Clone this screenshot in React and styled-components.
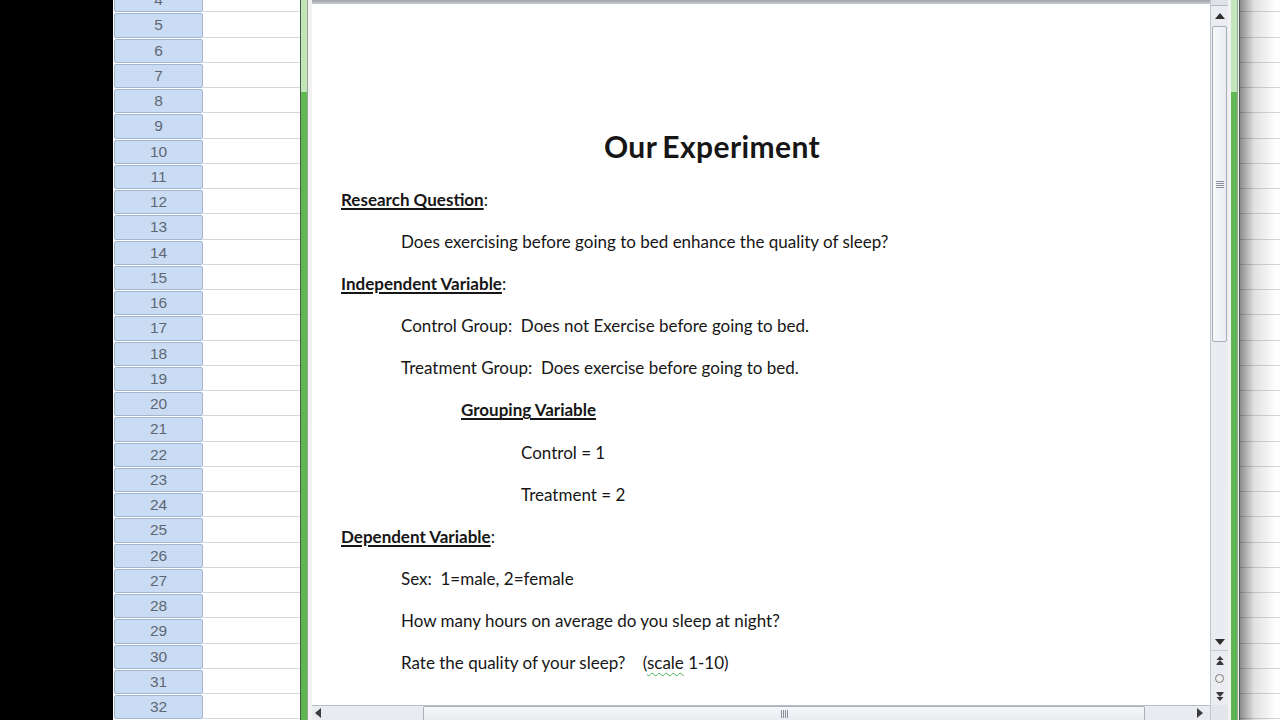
import React from 'react';
import styled, { createGlobalStyle } from 'styled-components';

const GlobalStyle = createGlobalStyle`
  html, body {
    margin: 0;
    padding: 0;
    background: #000;
  }
`

const ROW_H = 25.25;
const rows = Array.from({ length: 29 }, (_, i) => i + 4);

const Screen = styled.div`
  width: 1280px;
  height: 720px;
  display: flex;
  overflow: hidden;
  background: #000;
`

const BlackStrip = styled.div`
  width: 113px;
  flex-shrink: 0;
  background: #000;
`

const Sheet = styled.div`
  display: flex;
  flex-direction: column;
  margin-top: -13px;
  width: ${p => p.width}px;
  flex-shrink: 0;
  background: #fff;
  position: relative;
`

const HeaderCell = styled.div`
  height: ${ROW_H}px;
  box-sizing: border-box;
  flex-shrink: 0;
  padding: 1px 0 0 1px;
  background: #fff;
  div {
    height: 100%;
    box-sizing: border-box;
    border: 1px solid #a3b6cd;
    border-radius: 2px;
    background: #cadcf3;
    color: #5f6774;
    font-family: "Liberation Sans", Arial, sans-serif;
    font-size: 15.5px;
    display: flex;
    align-items: center;
    justify-content: center;
  }
`

const Cell = styled.div`
  height: ${ROW_H}px;
  flex-shrink: 0;
  box-sizing: border-box;
  border-bottom: 1px solid #d3d8e0;
`

const Shadow = styled.div`
  position: absolute;
  inset: 0;
  background: linear-gradient(to right, rgba(0,0,0,0.45), rgba(0,0,0,0.12) 14px, rgba(0,0,0,0) 36px);
  pointer-events: none;
`

const Frame = styled.div`
  width: 12px;
  flex-shrink: 0;
  display: flex;
  background: #f2f2f2;
  flex-direction: ${p => (p.right ? 'row-reverse' : 'row')};
  &::before {
    content: '';
    width: 1px;
    background: #4a5a4a;
  }
  &::after {
    content: '';
    width: 6px;
    margin: 0 ${p => (p.right ? '1px' : '0')} 0 0;
    background: linear-gradient(to bottom, #c3e5ba 0, #c3e5ba 92px, #62b954 92px, #5cb650 100%);
    border-right: 1px solid #98a298;
  }
`

const DocArea = styled.div`
  width: 898px;
  flex-shrink: 0;
  display: flex;
  flex-direction: column;
  background: #fff;
`

const TopBand = styled.div`
  height: 4px;
  background: linear-gradient(#9fa3a8, #c9ccd0);
  flex-shrink: 0;
`

const Page = styled.div`
  flex: 1;
  padding: 125px 0 0 29px;
  color: #161616;
  font-family: Lato, "Open Sans", sans-serif;
  font-size: 17px;
  overflow: hidden;
`

const Title = styled.h1`
  margin: 0 0 16px;
  width: 742px;
  text-align: center;
  font-size: 30px;
  line-height: 34px;
  font-weight: 700;
  letter-spacing: 0.4px;
  word-spacing: -2px;
`

const Line = styled.div`
  height: 42.1px;
  line-height: 42px;
  padding-left: ${p => (p.indent || 0) * 60}px;
  white-space: pre;
`

const Heading = styled.span`
  font-weight: 700;
  text-decoration: underline;
  text-decoration-thickness: 1.5px;
  text-underline-offset: 2px;
`

const Squiggle = styled.span`
  text-decoration: underline wavy #4caf50;
  text-decoration-thickness: 1px;
  text-underline-offset: 3px;
`

const HScroll = styled.div`
  height: 14px;
  flex-shrink: 0;
  display: flex;
  align-items: stretch;
  background: #e9ebf0;
  border-top: 1px solid #b9bec6;
`

const HThumb = styled.div`
  margin-left: 102px;
  width: 722px;
  box-sizing: border-box;
  border: 1px solid #a9b0bb;
  border-bottom: none;
  border-radius: 2px 2px 0 0;
  background: linear-gradient(#f6f7f9, #e8ebf0);
  display: flex;
  align-items: center;
  justify-content: center;
`

const Arrow = styled.div`
  width: 0;
  height: 0;
  align-self: center;
  border: 5px solid transparent;
  ${p => p.dir === 'left' && `border-right: 6px solid #3c3c3c; border-left: none; margin-left: 3px;`}
  ${p => p.dir === 'right' && `border-left: 6px solid #3c3c3c; border-right: none; margin-left: auto; margin-right: 7px;`}
  ${p => p.dir === 'up' && `border-bottom: 6px solid #2e2e2e; border-top: none; align-self: center;`}
  ${p => p.dir === 'down' && `border-top: 6px solid #2e2e2e; border-bottom: none; align-self: center;`}
`

const Grip = styled.div`
  display: flex;
  flex-direction: ${p => (p.vertical ? 'column' : 'row')};
  gap: 1px;
  span {
    background: #8a909a;
    ${p => (p.vertical ? 'width: 8px; height: 1px;' : 'width: 1px; height: 8px;')}
  }
`

const VScroll = styled.div`
  width: 18px;
  flex-shrink: 0;
  box-sizing: border-box;
  display: flex;
  flex-direction: column;
  background: #eaecf1;
  border-left: 1px solid #c3c7ce;
`

const SplitBox = styled.div`
  height: 5px;
  border-bottom: 1px solid #b5bac2;
  background: #dfe2e8;
`

const ArrowButton = styled.div`
  height: ${p => p.h || 18}px;
  display: flex;
  justify-content: center;
  align-items: center;
  border-bottom: ${p => (p.divider ? '1px solid #c6cad1' : 'none')};
`

const VThumb = styled.div`
  margin: 1px 1px 0 1px;
  height: 316px;
  box-sizing: border-box;
  border: 1px solid #a7aeb9;
  border-radius: 2px;
  background: linear-gradient(to right, #f7f8fa, #e9ecf1);
  display: flex;
  align-items: center;
  justify-content: center;
`

const Track = styled.div`
  flex: 1;
`

const NavIcon = styled.div`
  height: 18px;
  display: flex;
  align-items: center;
  justify-content: center;
`

const Corner = styled.div`
  height: 15px;
  background: #e3e5ea;
`

const Circle = styled.div`
  width: 7px;
  height: 7px;
  border-radius: 50%;
  border: 1px solid #7a7a7a;
  background: #f0f0f0;
`

const DoubleArrow = ({ down }) => (
  <svg width="8" height="9" viewBox="0 0 8 9" style={down ? { transform: 'scaleY(-1)' } : undefined}>
    <path d="M4 0 L7.5 4 H0.5 Z" fill="#3a3a3a" />
    <path d="M4 4 L7.5 8 H0.5 Z" fill="#3a3a3a" />
    <rect x="0.5" y="8" width="7" height="1" fill="#3a3a3a" />
  </svg>
)

const App = () => {
  return (
    <Screen>
      <GlobalStyle />
      <BlackStrip />
      <Sheet width={90}>
        {rows.map(n => (
          <HeaderCell key={n}><div>{n}</div></HeaderCell>
        ))}
      </Sheet>
      <Sheet width={97}>
        {rows.map(n => <Cell key={n} />)}
      </Sheet>

      <Frame />
      <DocArea>
        <TopBand />
        <Page>
          <Title>Our Experiment</Title>
          <Line><Heading>Research Question</Heading>:</Line>
          <Line indent={1}>Does exercising before going to bed enhance the quality of sleep?</Line>
          <Line><Heading>Independent Variable</Heading>:</Line>
          <Line indent={1}>Control Group:  Does not Exercise before going to bed.</Line>
          <Line indent={1}>Treatment Group:  Does exercise before going to bed.</Line>
          <Line indent={2}><Heading>Grouping Variable</Heading></Line>
          <Line indent={3}>Control = 1</Line>
          <Line indent={3}>Treatment = 2</Line>
          <Line><Heading>Dependent Variable</Heading>:</Line>
          <Line indent={1}>Sex:  1=male, 2=female</Line>
          <Line indent={1}>How many hours on average do you sleep at night?</Line>
          <Line indent={1}>Rate the quality of your sleep?    (<Squiggle>scale</Squiggle> 1-10)</Line>
        </Page>
        <HScroll>
          <Arrow dir="left" />
          <HThumb>
            <Grip><span /><span /><span /><span /></Grip>
          </HThumb>
          <Arrow dir="right" />
        </HScroll>
      </DocArea>
      <VScroll>
        <SplitBox />
        <ArrowButton h={19}><Arrow dir="up" /></ArrowButton>
        <VThumb>
          <Grip vertical><span /><span /><span /><span /></Grip>
        </VThumb>
        <Track />
        <ArrowButton h={16} divider><Arrow dir="down" /></ArrowButton>
        <NavIcon><DoubleArrow /></NavIcon>
        <NavIcon><Circle /></NavIcon>
        <NavIcon><DoubleArrow down /></NavIcon>
        <Corner />
      </VScroll>
      <Frame right />
      <Sheet width={40}>
        {rows.map(n => <Cell key={n} />)}
        <Shadow />
      </Sheet>
    </Screen>
  );
}

export default App;
